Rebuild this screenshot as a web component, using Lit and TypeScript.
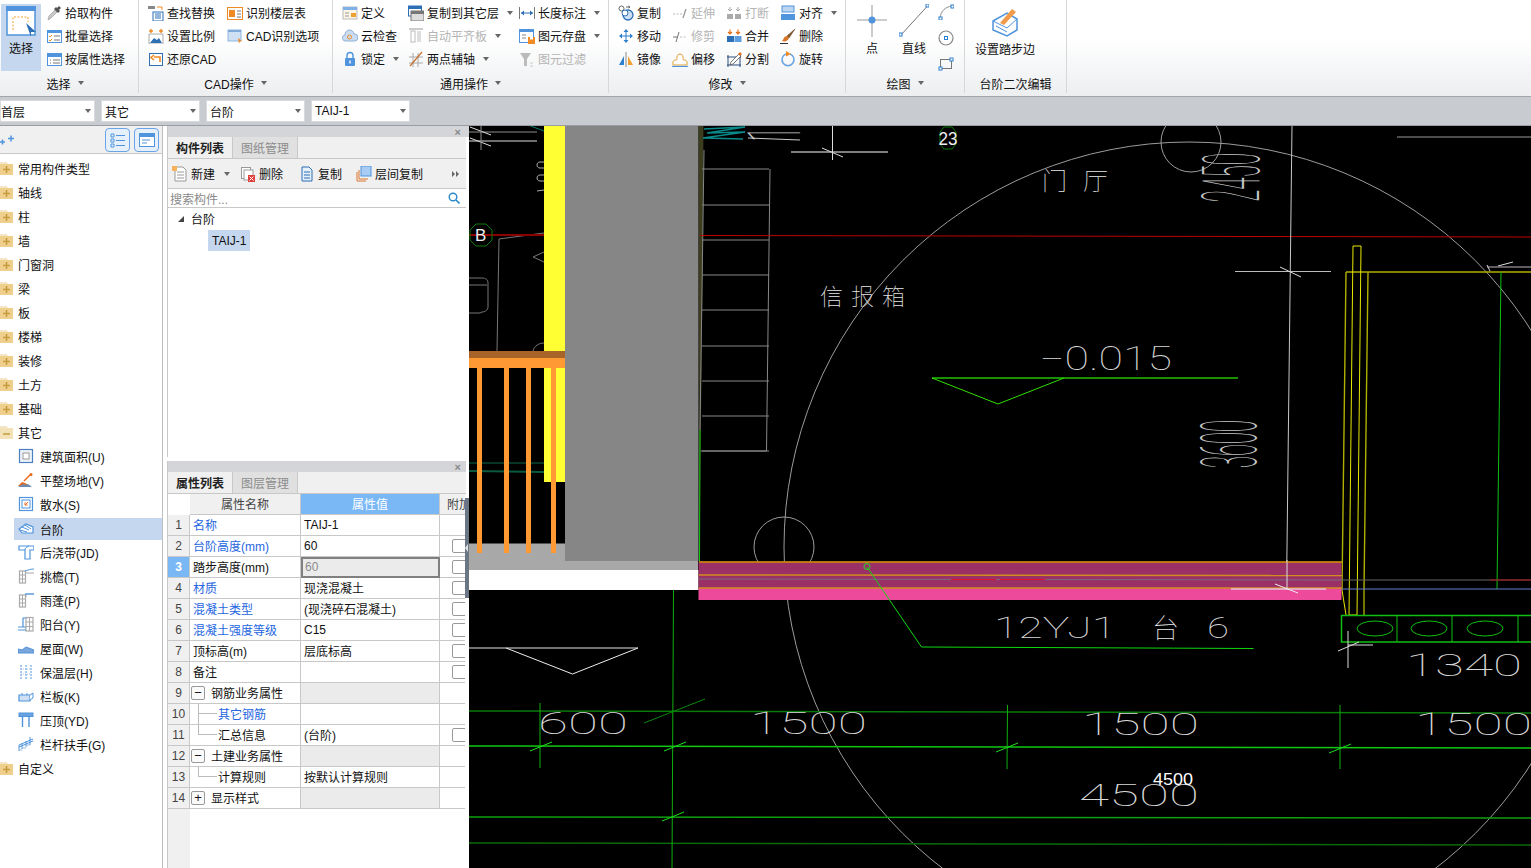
import {LitElement, css, html, svg} from "lit";
import {customElement} from "lit/decorators.js";

// 16x16 glyphs for the ribbon, tree and panel toolbars
const ICONS: Record<string, unknown> = {
  pick: svg`<path d="M2 15l1-4 6-6 2 2-6 6z" fill="#ccc" stroke="#999" stroke-width=".7"/><path d="M8 4l2-2 1 1 2-2 2 2-2 2 1 1-2 2z" fill="#555"/>`,
  batch: svg`<rect x="1.5" y="2.5" width="14" height="12" fill="#fff" stroke="#4f94dc"/><rect x="1" y="2" width="15" height="3" fill="#4f94dc"/><path d="M3 8l1 1 2-2M3 12l1 1 2-2" stroke="#f08a24" fill="none"/><path d="M8 8h6M8 12h6" stroke="#777"/>`,
  byprop: svg`<rect x="1.5" y="2.5" width="14" height="12" fill="#fff" stroke="#4f94dc"/><rect x="1" y="2" width="15" height="4" fill="#4f94dc"/><path d="M4 9h1M4 12h1M7 9h7M7 12h7" stroke="#777"/>`,
  find: svg`<path d="M0 1h7v3H0z" fill="#888"/><path d="M9 2h5v3" stroke="#f08a24" fill="none"/><rect x="5" y="7" width="10" height="9" fill="#fff" stroke="#2d6fb5"/><path d="M7 9h6M7 11h6M7 13h6" stroke="#2d6fb5"/>`,
  floor: svg`<rect x=".5" y="2.5" width="15" height="12" fill="#fff" stroke="#f08a24"/><rect x="2" y="5" width="6" height="7" fill="#f08a24"/><path d="M10 6h4M10 9h4M10 12h4" stroke="#777"/>`,
  scale: svg`<path d="M1 6h14v10H1z" fill="#fff" stroke="#aaa"/><path d="M2 15l4-5 3 2 2-2 3 5z" fill="#2d6fb5"/><path d="M1 3h4M11 3h4M3 1v4M13 1v4" stroke="#f08a24" stroke-width="1.4"/>`,
  cadopt: svg`<rect x="1" y="2" width="13" height="11" fill="#cfe0f4" stroke="#8fb6e0"/><rect x="1" y="2" width="13" height="2" fill="#7fa9d8"/><path d="M11 10l4 3-2 .5-1 2z" fill="#f08a24"/>`,
  restore: svg`<rect x="1.5" y="2.5" width="13" height="12" fill="#fff" stroke="#2d6fb5"/><path d="M12 11V6H6M6 4L3 6.500l3 2.500" stroke="#f08a24" stroke-width="1.600" fill="none"/>`,
  define: svg`<rect x="1" y="2" width="14" height="12" fill="#fdf6e6" stroke="#b9b9b9"/><rect x="1" y="2" width="14" height="3" fill="#7fb0e6"/><rect x="9" y="8" width="5" height="4" fill="#f0a030"/><path d="M3 8h4M3 11h4" stroke="#999"/>`,
  cloud: svg`<path d="M4 13a3 3 0 0 1-1-6 4.500 4.500 0 0 1 9-1 3.500 3.500 0 0 1 1 7z" fill="#c9dcf2" stroke="#8fb0d6"/><circle cx="7.500" cy="9" r="2" fill="none" stroke="#f08a24"/>`,
  lock: svg`<path d="M5 7V4.500a3 3 0 0 1 6 0V7" stroke="#4f94dc" stroke-width="1.400" fill="none"/><rect x="3" y="7" width="10" height="8" rx="1" fill="#4f94dc"/><rect x="7.300" y="9.500" width="1.400" height="3" fill="#fff"/>`,
  copyfloor: svg`<rect x=".5" y="1" width="13" height="10" fill="#fff" stroke="#2d6fb5"/><rect x="0" y="1" width="14" height="3" fill="#2d6fb5"/><rect x="3" y="6" width="13" height="10" fill="#ddd" stroke="#777"/><rect x="3" y="6" width="13" height="3" fill="#777"/>`,
  autoalign: svg`<path d="M1 1h14" stroke="#bbb" stroke-width="1.500"/><rect x="3" y="3" width="4" height="11" fill="#fff" stroke="#bbb"/><rect x="9" y="3" width="4" height="11" fill="#ddd"/>`,
  twopoint: svg`<path d="M1 6h14M1 12h14M5 2v14M10 2v14" stroke="#aaa"/><path d="M2 15L14 1" stroke="#c9722e" stroke-width="1.200"/>`,
  dim: svg`<path d="M.5 2v12M15.500 2v12" stroke="#777"/><path d="M2 8h12" stroke="#2d6fb5"/><path d="M2 8l3-2.500v5zM14 8l-3-2.500v5z" fill="#2d6fb5"/>`,
  save: svg`<rect x=".5" y="1.500" width="14" height="13" fill="#fff" stroke="#4f94dc"/><rect x="0" y="1" width="15" height="3" fill="#4f94dc"/><path d="M3 7h4M3 10h4" stroke="#888"/><rect x="9" y="9" width="7" height="7" fill="#f08a24"/><rect x="11" y="9" width="3" height="2.500" fill="#fff"/>`,
  filter: svg`<path d="M1 2h11L8 8v7H5V8z" fill="#bbb"/><path d="M11 12h3M11 15h3" stroke="#ccc"/>`,
  copy: svg`<circle cx="3.500" cy="3.500" r="2.500" fill="#fff" stroke="#666"/><path d="M8 2h4M12 2l-1.500-1M12 2l-1.500 1" stroke="#666"/><circle cx="10" cy="10" r="5" fill="#cfe0f4" stroke="#2d6fb5" stroke-width="1.300"/><circle cx="7" cy="8" r="3" fill="#fff" stroke="#2d6fb5"/>`,
  extend: svg`<path d="M1 9h9" stroke="#bbb" stroke-dasharray="2 1.500"/><path d="M11 13l3-9" stroke="#999" stroke-width="1.300"/>`,
  trim: svg`<path d="M1 9h5" stroke="#777"/><path d="M4 14l3-10" stroke="#777"/><path d="M8 9h7" stroke="#bbb" stroke-dasharray="2 1.500"/>`,
  break: svg`<rect x="1" y="9" width="6" height="5" fill="#aaa"/><rect x="9" y="9" width="6" height="5" fill="#aaa"/><path d="M4 2v4M12 2v4M2 4l2 2 2-2M10 4l2 2 2-2" stroke="#aaa" fill="none"/>`,
  merge: svg`<rect x="1" y="8" width="7" height="6" fill="#2d6fb5"/><rect x="8.500" y="8" width="7" height="6" fill="#5c9ee0"/><path d="M4 1.500v4M12 1.500v4M2 4l2 2 2-2M10 4l2 2 2-2" stroke="#e06a10" stroke-width="1.100" fill="none"/>`,
  align: svg`<rect x="2" y="1" width="12" height="6" fill="#bcd5f0" stroke="#4f94dc"/><rect x="1" y="9" width="14" height="6" fill="#4f94dc"/>`,
  move: svg`<path d="M8 1L5.500 4h5zM8 15l-2.500-3h5zM1 8l3-2.500v5zM15 8l-3-2.500v5z" fill="#2d7fd0"/><path d="M8 4v8M4 8h8" stroke="#2d7fd0"/>`,
  erase: svg`<path d="M15 1L7 8l2 2z" fill="#8a5a2c" stroke="#5c3a18" stroke-width=".5"/><path d="M7 8c-3 0-3 3-5 5 3 1 6 0 7-3z" fill="#d9762a"/><path d="M0 15.500h8" stroke="#333"/>`,
  mirror: svg`<path d="M1 14l5-9v9z" fill="#2d7fd0"/><path d="M8 1v15" stroke="#888"/><path d="M10 5l5 9h-5z" fill="#f0a030"/>`,
  offset: svg`<path d="M1 14v-3c0-1 1-2 3-2 1 0 1-1 1-3 0-4 6-4 6 0 0 2 0 3 1 3 2 0 3 1 3 2v3z" fill="#fff" stroke="#e0a030"/><path d="M0 15.500h16" stroke="#4f94dc" stroke-width="1.200"/>`,
  split: svg`<path d="M1 6h14M1 14h14M2 4v12M14 4v12" stroke="#2a4f80" fill="none"/><path d="M5 11l8-8 2 2-8 8-3 1z" fill="#fff" stroke="#555" stroke-width=".8"/><path d="M12 3l2-2 2 2-2 2z" fill="#d9762a"/>`,
  rotate: svg`<path d="M6 3a6 6 0 1 0 4 0" stroke="#6aa4e0" stroke-width="1.500" fill="none"/><path d="M6 0l5 3-5 2.500z" fill="#f08a24"/>`,
  arc: svg`<path d="M2 14C3 7 7 3 14 2" stroke="#888" fill="none"/><rect x="1" y="13" width="3" height="3" fill="#fff" stroke="#2d7fd0"/><rect x="13" y="1" width="3" height="3" fill="#fff" stroke="#2d7fd0"/>`,
  circle: svg`<circle cx="8" cy="8" r="7" fill="none" stroke="#888" stroke-width="1.200"/><rect x="6.500" y="6.500" width="3" height="3" fill="#fff" stroke="#2d7fd0"/>`,
  rect: svg`<rect x="2.500" y="3.500" width="11" height="9" fill="none" stroke="#777"/><rect x="12" y="2" width="3" height="3" fill="#fff" stroke="#2d7fd0"/><rect x="1" y="11" width="3" height="3" fill="#fff" stroke="#2d7fd0"/>`,
  area: svg`<rect x="1.500" y="1.500" width="13" height="13" fill="#eef3fa" stroke="#4f7fc0" stroke-width="1.200"/><rect x="5" y="5" width="6" height="6" fill="#fff" stroke="#999"/>`,
  level: svg`<path d="M0 14l4-4 3 1 5 3z" fill="#e8681c"/><path d="M0 15l5-3 3 1 2-1 4 3z" fill="#6d8bb5"/><path d="M6 9l6-6" stroke="#e8681c" stroke-width="1.500"/><circle cx="13" cy="2.500" r="1.500" fill="#e8681c"/>`,
  apron: svg`<rect x="1.500" y="1.500" width="13" height="13" fill="#fff" stroke="#4f94dc" stroke-width="1.200"/><rect x="4" y="4" width="8" height="8" fill="#fff" stroke="#4f94dc"/><path d="M10 6l-3 3M7 6.500V9h2.500" stroke="#e8681c" fill="none"/>`,
  step: svg`<path d="M1 8l7-5 7 3v6H4z" fill="#fff" stroke="#4f94dc" stroke-width="1.200"/><path d="M2 9l7 2M4 6l7 3M7 4l6 4" stroke="#4f94dc"/>`,
  jd: svg`<path d="M1 2h15v4H12v9H7V6H1z" fill="#fff" stroke="#4f94dc" stroke-width="1.200"/><path d="M7 6c0-2 1-3 4-4" stroke="#4f94dc" fill="none"/>`,
  cornice: svg`<rect x="1.500" y="3" width="6" height="12" fill="#fff" stroke="#aaa" stroke-width="1.200"/><path d="M4.500 3v12M1.500 7h6M1.500 11h6" stroke="#aaa"/><path d="M7 3c3-1 6-2 9-2" stroke="#4f94dc" fill="none"/><path d="M7 5h9" stroke="#aaa"/>`,
  canopy: svg`<rect x="1.500" y="3" width="6" height="12" fill="#fff" stroke="#aaa" stroke-width="1.200"/><path d="M4.500 3v12M1.500 7h6M1.500 11h6" stroke="#aaa"/><path d="M7 2h9" stroke="#4f94dc" stroke-width="1.400"/><path d="M8 5V3" stroke="#aaa"/>`,
  balcony: svg`<rect x="8" y="1.500" width="7" height="13.500" fill="#fff" stroke="#aaa" stroke-width="1.200"/><path d="M11.500 1.500V15M8 6h7M8 10.500h7" stroke="#aaa"/><path d="M8 2H5v9M0 11h8M0 14h8" stroke="#4f94dc" stroke-width="1.200" fill="none"/>`,
  roof: svg`<path d="M0 13V9l4 1 4-3 8 3v3z" fill="#7aa6dc" stroke="#4f94dc"/>`,
  insul: svg`<path d="M3 1v14M8 1v14M13 1v14" stroke="#4f94dc" stroke-dasharray="2 1"/><path d="M3 5h10M3 10h10" stroke="#aac5e8" stroke-dasharray="1 1"/>`,
  rail: svg`<path d="M1 7h11v6H1z" fill="#cfe0f4" stroke="#4f94dc" stroke-width="1.200"/><path d="M12 7l3-2v5l-3 2" fill="#fff" stroke="#4f94dc"/><path d="M4 7V5M9 7V5" stroke="#4f94dc"/>`,
  coping: svg`<rect x="1" y="1" width="14" height="3.500" fill="#6aa4e0" stroke="#4f94dc"/><path d="M4.500 5v10M11 5v10" stroke="#4f94dc" stroke-width="1.400"/>`,
  handrail: svg`<path d="M1 15V9l14-6" stroke="#4f94dc" fill="none"/><path d="M4 13V7M8 11V5M12 9V1M1 11l14-6" stroke="#4f94dc" fill="none"/><path d="M1 14h3M4 12h4M8 9h4" stroke="#8fb6e0"/>`,
  tnew: svg`<path d="M3 1h8l3 3v11H3z" fill="#fff" stroke="#999"/><path d="M5 6h7M5 9h7M5 12h7" stroke="#999"/><rect x="0" y="0" width="5" height="5" fill="#f6b35c"/>`,
  tdel: svg`<rect x="1.500" y="1.500" width="9" height="11" fill="#fff" stroke="#999"/><rect x="4" y="4" width="9" height="10" fill="#fff" stroke="#999"/><rect x="8" y="9" width="7" height="7" fill="#e0403c"/><path d="M9.500 10.500l4 4M13.500 10.500l-4 4" stroke="#fff"/>`,
  tcopy: svg`<path d="M3 1h7l3 3v11H3z" fill="#e6f0fb" stroke="#2d6fb5"/><path d="M5 6h6M5 9h6M5 12h6" stroke="#2d6fb5"/>`,
  tfloor: svg`<path d="M1 6v9h9" stroke="#d9762a" fill="none"/><path d="M3 4v9h9" stroke="#d9762a" fill="none"/><rect x="5" y="0" width="10" height="10" fill="#a8ccf4" stroke="#4f94dc"/>`,
};

const icon = (name: string) =>
  html`<svg class="ic" viewBox="0 0 16 16">${ICONS[name]}</svg>`;

interface Item {
  i: string;
  t: string;
  caret?: boolean;
  off?: boolean;
}

const G2 = [
  [{i: "find", t: "查找替换"}, {i: "scale", t: "设置比例"}, {i: "restore", t: "还原CAD"}],
  [{i: "floor", t: "识别楼层表"}, {i: "cadopt", t: "CAD识别选项"}],
];
const G3 = [
  [{i: "define", t: "定义"}, {i: "cloud", t: "云检查"}, {i: "lock", t: "锁定", caret: true}],
  [
    {i: "copyfloor", t: "复制到其它层", caret: true},
    {i: "autoalign", t: "自动平齐板", caret: true, off: true},
    {i: "twopoint", t: "两点辅轴", caret: true},
  ],
  [
    {i: "dim", t: "长度标注", caret: true},
    {i: "save", t: "图元存盘", caret: true},
    {i: "filter", t: "图元过滤", off: true},
  ],
];
const G4 = [
  [{i: "copy", t: "复制"}, {i: "move", t: "移动"}, {i: "mirror", t: "镜像"}],
  [{i: "extend", t: "延伸", off: true}, {i: "trim", t: "修剪", off: true}, {i: "offset", t: "偏移"}],
  [{i: "break", t: "打断", off: true}, {i: "merge", t: "合并"}, {i: "split", t: "分割"}],
  [{i: "align", t: "对齐", caret: true}, {i: "erase", t: "删除"}, {i: "rotate", t: "旋转"}],
];

const FOLDERS = ["常用构件类型", "轴线", "柱", "墙", "门窗洞", "梁", "板", "楼梯", "装修", "土方", "基础"];
const CHILDREN = [
  ["area", "建筑面积(U)"],
  ["level", "平整场地(V)"],
  ["apron", "散水(S)"],
  ["step", "台阶"],
  ["jd", "后浇带(JD)"],
  ["cornice", "挑檐(T)"],
  ["canopy", "雨蓬(P)"],
  ["balcony", "阳台(Y)"],
  ["roof", "屋面(W)"],
  ["insul", "保温层(H)"],
  ["rail", "栏板(K)"],
  ["coping", "压顶(YD)"],
  ["handrail", "栏杆扶手(G)"],
];

interface Row {
  name: string;
  value?: string;
  link?: boolean;
  check?: boolean;
  fold?: "-" | "+";
  conn?: "t" | "l";
}

const ROWS: Row[] = [
  {name: "名称", value: "TAIJ-1", link: true},
  {name: "台阶高度(mm)", value: "60", link: true, check: true},
  {name: "踏步高度(mm)", value: "60", check: true},
  {name: "材质", value: "现浇混凝土", link: true, check: true},
  {name: "混凝土类型", value: "(现浇碎石混凝土)", link: true, check: true},
  {name: "混凝土强度等级", value: "C15", link: true, check: true},
  {name: "顶标高(m)", value: "层底标高", check: true},
  {name: "备注", value: "", check: true},
  {name: "钢筋业务属性", fold: "-"},
  {name: "其它钢筋", value: "", link: true, conn: "t"},
  {name: "汇总信息", value: "(台阶)", check: true, conn: "l"},
  {name: "土建业务属性", fold: "-"},
  {name: "计算规则", value: "按默认计算规则", conn: "l"},
  {name: "显示样式", fold: "+"},
];

// CAD lettering: stretched thin text placed by its box on the drawing
const cad = (t: string, x: number, y: number, len: number, h: number, fill = "#d8d8d8") =>
  svg`<text class="cad" x=${x} y=${y} fill=${fill} font-size=${h / 0.71} textLength=${len} lengthAdjust="spacingAndGlyphs">${t}</text>`;
const cadUp = (t: string, x: number, y: number, len: number, h: number) =>
  svg`<text class="cad" transform="translate(${x} ${y}) rotate(-90)" fill="#c4c4c4" font-size=${h / 0.71} textLength=${len} lengthAdjust="spacingAndGlyphs">${t}</text>`;
const ln = (x1: number, y1: number, x2: number, y2: number, c: string, w = 1) =>
  svg`<line x1=${x1} y1=${y1} x2=${x2} y2=${y2} stroke=${c} stroke-width=${w}/>`;

@customElement("app-root")
export class AppRoot extends LitElement {
  static override styles = css`
    :host {
      display: flex;
      flex-direction: column;
      width: 1531px;
      height: 868px;
      overflow: hidden;
      background: #fff;
      color: #111;
      font: 12px "Liberation Sans", "Noto Sans CJK SC", sans-serif;
    }
    .ic {
      width: 16px;
      height: 16px;
      flex: none;
      display: block;
    }
    .caret {
      width: 0;
      height: 0;
      border: 3.5px solid transparent;
      border-top: 4px solid #666;
      border-bottom: 0;
      flex: none;
    }

    /* ribbon */
    .ribbon {
      display: flex;
      height: 96px;
      flex: none;
      background: linear-gradient(#fff 40%, #eceef0);
      border-bottom: 1px solid #a2a5aa;
      box-sizing: content-box;
    }
    .group {
      display: flex;
      flex-direction: column;
      box-sizing: border-box;
      height: 93px;
      border-right: 1px solid #d6d8db;
      flex: none;
    }
    .g1 { width: 139px; }
    .g2 { width: 194px; }
    .g3 { width: 276px; }
    .g4 { width: 237px; }
    .g5 { width: 119px; }
    .g6 { width: 102px; }
    .gbody {
      display: flex;
      height: 72px;
      padding: 1px 0 0 9px;
      box-sizing: border-box;
    }
    .g1 .gbody { padding: 4px 0 0 1px; }
    .glabel {
      flex: 1;
      display: flex;
      align-items: center;
      justify-content: center;
      gap: 7px;
      padding-top: 1px;
    }
    .g1 .glabel { padding-right: 8px; }
    .col { flex: none; }
    .g2 .col:first-child { width: 79px; }
    .g3 .col:nth-child(1) { width: 66px; }
    .g3 .col:nth-child(2) { width: 111px; }
    .g4 .col { width: 54px; }
    .item {
      display: flex;
      align-items: center;
      gap: 3px;
      height: 23px;
      white-space: nowrap;
    }
    .item .caret { margin-left: 5px; }
    .off { color: #b4b4b4; }
    .big {
      display: flex;
      flex-direction: column;
      align-items: center;
      flex: none;
    }
    .sel {
      width: 40px;
      height: 67px;
      background: #c5d7ee;
      margin-right: 5px;
      padding-top: 2px;
      box-sizing: border-box;
      gap: 3px;
    }
    .sel svg { width: 30px; height: 30px; }
    .g1 .col { margin-top: -3px; }
    .g5 .gbody { padding-left: 11px; gap: 12px; }
    .draw {
      width: 30px;
      gap: 2px;
      padding-top: 3px;
    }
    .draw svg { width: 30px; height: 33px; }
    .minis {
      display: flex;
      flex-direction: column;
      gap: 10px;
      margin-left: -3px;
      padding-top: 3px;
    }
    .g6 .gbody { padding: 8px 0 0 10px; }
    .stepbtn { gap: 2px; }
    .stepbtn svg { width: 30px; height: 30px; }

    /* selectors */
    .bar {
      display: flex;
      gap: 6px;
      height: 28px;
      flex: none;
      box-sizing: border-box;
      padding-top: 3px;
      background: #c8cbd0;
    }
    .combo {
      display: flex;
      align-items: center;
      justify-content: space-between;
      width: 99px;
      height: 22px;
      padding: 0 3px 0 3px;
      box-sizing: border-box;
      background: #fff;
      border: 1px solid #d8dade;
    }
    .combo:first-child { width: 95px; padding-left: 0; }

    /* main area */
    .main {
      display: flex;
      flex: 1;
      min-height: 0;
      border-top: 1px solid #9a9da3;
    }
    .tree {
      width: 163px;
      flex: none;
      box-sizing: border-box;
      border-right: 1px solid #bcbec2;
    }
    .treehead {
      display: flex;
      align-items: center;
      gap: 4px;
      height: 28px;
      box-sizing: border-box;
      padding-right: 3px;
      background: #f0f0f0;
      border-bottom: 1px solid #c8c8c8;
    }
    .treehead .plus { margin-right: auto; width: 14px; height: 10px; }
    .tog {
      width: 25px;
      height: 24px;
      box-sizing: border-box;
      display: flex;
      align-items: center;
      justify-content: center;
      background: #e6f0fb;
      border: 1px solid #6aa4e8;
      border-radius: 4px;
    }
    .nodes { padding-top: 2px; }
    .node {
      display: flex;
      align-items: center;
      gap: 5px;
      height: 24px;
    }
    .folder { width: 13px; height: 14px; flex: none; }
    .child {
      display: flex;
      align-items: center;
      gap: 6px;
      height: 24px;
      margin-left: 14px;
      padding-left: 4px;
    }
    .child.on { background: #c5d7ee; height: 22px; margin-top: 2px; }
    .panels {
      width: 302px;
      margin-left: 4px;
      flex: none;
      display: flex;
      flex-direction: column;
      position: relative;
    }
    .panel {
      display: flex;
      flex-direction: column;
      border-left: 1px solid #c8c8c8;
      width: 298px;
    }
    .p1 { height: 331px; flex: none; }
    .p2 { flex: 1; min-height: 0; overflow: hidden; }
    .gap { height: 4px; width: 302px; flex: none; }
    .ptitle {
      width: 301px;
      height: 11px;
      flex: none;
      display: flex;
      align-items: center;
      justify-content: flex-end;
      padding-right: 8px;
      box-sizing: border-box;
      background: #d3d5d9;
      color: #888;
      font-size: 11px;
      font-weight: bold;
    }
    .tabs {
      display: flex;
      height: 22px;
      flex: none;
      background: #f0f0f0;
      border-bottom: 1px solid #c8c8c8;
      box-sizing: border-box;
    }
    .tab {
      width: 65px;
      display: flex;
      align-items: center;
      justify-content: center;
      box-sizing: border-box;
      border-right: 1px solid #c8c8c8;
    }
    .tab.act { color: #222; font-weight: 600; }
    .tab.dim { background: #e0e0e0; color: #8c8c8c; }
    .ptools {
      display: grid;
      grid-template-columns: 68px 59px 57px 1fr 14px;
      align-items: center;
      height: 30px;
      flex: none;
      padding-left: 4px;
      box-sizing: border-box;
      background: #f0f0f0;
      border-bottom: 1px solid #c8c8c8;
    }
    .ptool { display: flex; align-items: center; gap: 3px; }
    .ptool .caret { margin-left: 6px; }
    .search {
      display: flex;
      align-items: center;
      justify-content: space-between;
      height: 19px;
      flex: none;
      padding: 0 6px 0 2px;
      box-sizing: border-box;
      color: #8a8a8a;
      border-bottom: 1px solid #c8c8c8;
    }
    .search svg { width: 12px; height: 12px; }
    .ptree { padding: 0 0 0 10px; }
    .proot { display: flex; align-items: center; gap: 7px; height: 21px; }
    .tri {
      width: 0;
      height: 0;
      border-style: solid;
      border-width: 0 0 6px 6px;
      border-color: transparent transparent #444 transparent;
    }
    .pleaf {
      display: inline-flex;
      align-items: center;
      height: 21px;
      margin: 1px 0 0 30px;
      padding: 0 4px;
      background: #c5d7ee;
    }
    .grid {
      display: grid;
      grid-template-columns: 22px 111px 139px 25px;
      grid-auto-rows: 21px;
      flex: 1;
      align-content: start;
      background: linear-gradient(to right, #f0f0f0 22px, #fff 22px);
    }
    .cell {
      display: flex;
      align-items: center;
      box-sizing: border-box;
      border-right: 1px solid #c8c8c8;
      border-bottom: 1px solid #c8c8c8;
      padding-left: 3px;
      padding-bottom: 1px;
      white-space: nowrap;
      overflow: hidden;
      min-width: 0;
    }
    .num { justify-content: center; background: #f0f0f0; padding: 0 0 1px; color: #444; }
    .num.cur { background: #7ab8f5; color: #fff; font-weight: bold; }
    .hd { background: #f0f0f0; justify-content: center; color: #444; padding: 0 0 1px; }
    .hd.blank { background: #fff; border: 0; }
    .hd.val { background: #7ab8f5; color: #fff; }
    .hd.extra { justify-content: flex-start; padding-left: 7px; border-right: 0; }
    .link { color: #2566e0; }
    .edit {
      background: #ebebeb;
      color: #8c8c8c;
      border: 2px solid #808080;
      padding-left: 2px;
    }
    .shade { background: #ebebeb; }
    .extra { border-right: 0; padding-left: 12px; }
    .box {
      width: 16px;
      height: 14px;
      flex: none;
      box-sizing: border-box;
      border: 1px solid #999;
      border-radius: 2px;
      background: #fff;
    }
    .fold {
      width: 14px;
      height: 14px;
      flex: none;
      box-sizing: border-box;
      border: 1px solid #999;
      border-radius: 2px;
      display: flex;
      align-items: center;
      justify-content: center;
      margin: 0 6px 0 -2px;
      background: #fafafa;
      font-size: 13px;
      line-height: 1;
    }
    .conn {
      position: relative;
      width: 24px;
      height: 21px;
      flex: none;
      margin-left: -3px;
    }
    .conn::before {
      content: "";
      position: absolute;
      left: 8px;
      top: 0;
      width: 18px;
      height: 10px;
      border-left: 1px solid #bbb;
      border-bottom: 1px solid #bbb;
    }
    .conn.t::after {
      content: "";
      position: absolute;
      left: 8px;
      top: 10px;
      height: 11px;
      border-left: 1px solid #bbb;
    }
    .conn + span { margin-left: 4px; }
    .splitter {
      position: absolute;
      right: 0;
      top: 372px;
      width: 4px;
      height: 100px;
      background: #6a7683;
    }
    .splitter::after {
      content: "";
      position: absolute;
      left: 0;
      top: 46px;
      border: 4px solid transparent;
      border-left: 0;
      border-right: 3px solid #dfe3e6;
    }
    .canvas {
      flex: 1;
      min-width: 0;
      background: #000;
      display: block;
    }
    .cad {
      font-family: Roboto, "Liberation Sans", sans-serif;
      font-weight: 100;
    }
    .cadcjk {
      font-family: "Noto Sans CJK SC", sans-serif;
      font-weight: 100;
    }
  `;

  private renderItem(it: Item) {
    return html`<div class="item ${it.off ? "off" : ""}">
      ${icon(it.i)}<span>${it.t}</span>${it.caret ? html`<i class="caret"></i>` : ""}
    </div>`;
  }

  private renderCols(cols: Item[][]) {
    return cols.map((c) => html`<div class="col">${c.map((it) => this.renderItem(it))}</div>`);
  }

  private renderRibbon() {
    return html`<div class="ribbon">
      <div class="group g1">
        <div class="gbody">
          <div class="big sel">
            <svg viewBox="0 0 30 30">
              <rect x="1" y="1" width="28" height="28" fill="#fff" stroke="#4f94dc" stroke-width="1.500"/>
              <rect x="0" y="0" width="30" height="5" fill="#4f94dc"/>
              <path d="M7 24V11h15v5" fill="none" stroke="#f0a030" stroke-dasharray="2 1.500"/>
              <path d="M20 17l10 9h-5v5z" fill="#2d6fb5"/>
            </svg>
            <span>选择</span>
          </div>
          <div class="col">
            ${[{i: "pick", t: "拾取构件"}, {i: "batch", t: "批量选择"}, {i: "byprop", t: "按属性选择"}].map((it) =>
              this.renderItem(it)
            )}
          </div>
        </div>
        <div class="glabel">选择<i class="caret"></i></div>
      </div>
      <div class="group g2">
        <div class="gbody">${this.renderCols(G2)}</div>
        <div class="glabel">CAD操作<i class="caret"></i></div>
      </div>
      <div class="group g3">
        <div class="gbody">${this.renderCols(G3)}</div>
        <div class="glabel">通用操作<i class="caret"></i></div>
      </div>
      <div class="group g4">
        <div class="gbody">${this.renderCols(G4)}</div>
        <div class="glabel">修改<i class="caret"></i></div>
      </div>
      <div class="group g5">
        <div class="gbody">
          <div class="big draw">
            <svg viewBox="0 0 30 33">
              <path d="M0 16h30M15 1v32" stroke="#999"/>
              <circle cx="15" cy="16" r="3.500" fill="#4f94dc"/>
            </svg>
            <span>点</span>
          </div>
          <div class="big draw">
            <svg viewBox="0 0 30 33">
              <path d="M1.500 31.500L28.500 2" stroke="#777"/>
              <rect x="0" y="29" width="3" height="3" fill="#fff" stroke="#2d7fd0"/>
              <rect x="27" y="0" width="3" height="3" fill="#fff" stroke="#2d7fd0"/>
            </svg>
            <span>直线</span>
          </div>
          <div class="minis">${icon("arc")}${icon("circle")}${icon("rect")}</div>
        </div>
        <div class="glabel">绘图<i class="caret"></i></div>
      </div>
      <div class="group g6">
        <div class="gbody">
          <div class="big stepbtn">
            <svg viewBox="0 0 30 30">
              <path d="M3 13l14-8 10 6v11l-10 6-14-6z" fill="#fff" stroke="#4f94dc" stroke-width="1.500"/>
              <path d="M3 13l14 7 10-9M6 18l11 6" stroke="#4f94dc" fill="none"/>
              <path d="M10 15L22 1l4 3-12 13z" fill="#f09a4a"/>
            </svg>
            <span>设置踏步边</span>
          </div>
        </div>
        <div class="glabel">台阶二次编辑</div>
      </div>
    </div>`;
  }

  private folder(open = false) {
    return html`<svg class="folder" viewBox="0 0 13 14">
      <path d="M0 3l1-1h6l1 1h5v11H0z" fill=${open ? "#f3e2b8" : "#efcf8c"}/>
      <path d="M0 1h7v2H0z" fill="#f3e6c8"/>
      ${open
        ? svg`<path d="M3 9h7" stroke="#c49a3f" stroke-width="1.500"/>`
        : svg`<path d="M3 8.500h7M6.500 5v7" stroke="#c49a3f" stroke-width="1.500"/>`}
    </svg>`;
  }

  private renderTree() {
    return html`<div class="tree">
      <div class="treehead">
        <svg class="plus" viewBox="0 0 14 10">
          <path d="M8 3.500h6M11 .5v6M0 7h5M2.500 4.500v5" stroke="#4f94dc" stroke-width="1.500"/>
        </svg>
        <div class="tog">
          <svg class="ic" viewBox="0 0 16 16">
            <path d="M1 2h3v3H1zM1 7h3v3H1zM1 12h3v3H1z" fill="none" stroke="#4f94dc"/>
            <path d="M6 3.500h9M6 8.500h9M6 13.500h9" stroke="#4f94dc"/>
          </svg>
        </div>
        <div class="tog">
          <svg class="ic" viewBox="0 0 16 16">
            <rect x=".5" y="1.500" width="15" height="13" fill="#fff" stroke="#4f94dc"/>
            <rect x="0" y="1" width="16" height="4" fill="#4f94dc"/>
            <path d="M3 8h8M3 11h5" stroke="#4f94dc"/>
          </svg>
        </div>
      </div>
      <div class="nodes">
        ${FOLDERS.map((f) => html`<div class="node">${this.folder()}<span>${f}</span></div>`)}
        <div class="node">${this.folder(true)}<span>其它</span></div>
        ${CHILDREN.map(
          ([ic, t]) => html`<div class="child ${t === "台阶" ? "on" : ""}">${icon(ic)}<span>${t}</span></div>`
        )}
        <div class="node">${this.folder()}<span>自定义</span></div>
      </div>
    </div>`;
  }

  private renderGrid() {
    return html`<div class="grid">
      <div class="cell hd blank"></div>
      <div class="cell hd">属性名称</div>
      <div class="cell hd val">属性值</div>
      <div class="cell hd extra">附加</div>
      ${ROWS.map((r, idx) => {
        const cur = idx === 2;
        return html`
          <div class="cell num ${cur ? "cur" : ""}">${idx + 1}</div>
          <div class="cell">
            ${r.fold ? html`<span class="fold">${r.fold === "-" ? "−" : "+"}</span>` : ""}
            ${r.conn ? html`<i class="conn ${r.conn}"></i>` : ""}
            <span class=${r.link ? "link" : ""}>${r.name}</span>
          </div>
          <div class="cell ${cur ? "edit" : ""} ${r.fold ? "shade" : ""}">${r.value ?? ""}</div>
          <div class="cell extra">${r.check ? html`<i class="box"></i>` : ""}</div>
        `;
      })}
    </div>`;
  }

  private renderPanels() {
    return html`<div class="panels">
      <div class="panel p1">
        <div class="ptitle">×</div>
        <div class="tabs">
          <div class="tab act">构件列表</div>
          <div class="tab dim">图纸管理</div>
        </div>
        <div class="ptools">
          <div class="ptool">${icon("tnew")}新建<i class="caret"></i></div>
          <div class="ptool">${icon("tdel")}删除</div>
          <div class="ptool">${icon("tcopy")}复制</div>
          <div class="ptool">${icon("tfloor")}层间复制</div>
          <svg width="8" height="8" viewBox="0 0 8 8"><path d="M0 1l3 3-3 3zM4 1l3 3-3 3z" fill="#666"/></svg>
        </div>
        <div class="search">
          搜索构件...
          <svg viewBox="0 0 12 12">
            <circle cx="5" cy="5" r="3.800" fill="none" stroke="#2a8ac8" stroke-width="1.400"/>
            <path d="M8 8l3.500 3.500" stroke="#2a8ac8" stroke-width="1.600"/>
          </svg>
        </div>
        <div class="ptree">
          <div class="proot"><i class="tri"></i>台阶</div>
          <div class="pleaf">TAIJ-1</div>
        </div>
      </div>
      <div class="gap"></div>
      <div class="panel p2">
        <div class="ptitle">×</div>
        <div class="tabs">
          <div class="tab act">属性列表</div>
          <div class="tab dim">图层管理</div>
        </div>
        ${this.renderGrid()}
      </div>
      <div class="splitter"></div>
    </div>`;
  }

  private renderCanvas() {
    const gray = "#8c8c8c";
    return html`<svg class="canvas" viewBox="469 126 1062 742" preserveAspectRatio="xMinYMin slice">
      <!-- left block: wall, railing, slab -->
      <rect x="544" y="125" width="21" height="357" fill="#ffff33"/>
      <rect x="469" y="543.500" width="229" height="26.500" fill="#a8a8a8"/>
      <rect x="565" y="126" width="133.500" height="435" fill="#868686"/>
      <rect x="469" y="570" width="229.500" height="20" fill="#fff"/>
      <path d="M698.500 126h5l-1 150-3 280z" fill="#3c3c1e"/>
      ${ln(700, 430, 699.500, 561, "#10d010")}
      ${ln(469, 463, 544, 463, "#0a6a4c")} ${ln(469, 471, 544, 472, "#0a5a40", 2)}
      <rect x="469" y="351" width="96" height="7" fill="#a86428"/>
      <rect x="469" y="358" width="96" height="10" fill="#ff9933"/>
      ${[477, 504, 526, 551].map((x) => svg`<rect x=${x} y="368" width="5" height="185" fill="#ff9933"/>`)}

      <!-- top-left linework -->
      ${ln(469, 132, 537, 132, gray)} ${ln(469, 141, 537, 141, "#ddd")}
      ${ln(470, 127, 491, 135, "#ddd")} ${ln(470, 138, 491, 146, "#ddd")} ${ln(481, 125, 481, 150, gray)}
      ${ln(528, 125, 544, 131, "#0a7a6a")}
      <path d="M544 162h-4c-4 0-4 6 0 6h4M544 175h-4c-4 0-4 6 0 6h4M544 190l-7 1" fill="none" stroke="#aaa"/>
      <path d="M499 239l45-6M499 239l-2 112M544 252l-11 5 11 5" fill="none" stroke="#777"/>
      <path d="M469 278h13c4 0 6 2 6 5v24c0 3-3 5-6 5l-2 1h-11M469 285h18" fill="none" stroke="#777"/>
      <path d="M533 351c1-5 6-8 11-8" fill="none" stroke="#777"/>
      ${ln(469, 235, 544, 235, "#8b0000", 2)}
      <polygon points="476,224 486,224 492,230 492,240 486,246 476,246 470,240 470,230" fill="none" stroke="#0a7a0a"/>
      <text x="475" y="241" fill="#eee" font-size="17" font-family="Liberation Sans">B</text>

      <!-- stair ladder -->
      ${[169, 205, 240, 275, 310, 346, 381, 416, 451].map((y) => ln(702, y, 769, y, "#888"))}
      <path d="M704 150l-4 280M770 169l-3.500 282h-66" fill="none" stroke="#888"/>
      <path d="M704 129l41-2-38 6 38-1-42 6 40 1" fill="none" stroke="#0a8a8a" stroke-width="1.500"/>
      ${cadUp("100", 800, 142, 49, 53)}
      ${ln(748, 138, 800, 140, "#ccc")}

      <!-- arcs and circles -->
      <circle cx="1189" cy="547" r="405" fill="none" stroke="#9c9c9c"/>
      <circle cx="784" cy="547" r="30" fill="none" stroke="#9c9c9c"/>
      <circle cx="1191" cy="142" r="30" fill="none" stroke="#9c9c9c"/>

      <!-- axis and ticks -->
      ${ln(700, 235.500, 1531, 237, "#c00000")}
      ${ln(1292, 125, 1286.500, 590, "#c8c8c8")}
      ${ln(1235, 271.500, 1331, 271.500, "#bbb")} ${ln(1280, 267, 1301, 277, "#ddd")}
      ${ln(791, 152, 888, 152, "#aaa", 1.500)} ${ln(832.500, 125, 832.500, 160, "#ddd")} ${ln(822, 148, 843, 157, "#ddd")}
      ${ln(1397, 137, 1531, 137, "#999")}
      <polygon points="944,127 952,127 956,132 956,144 952,149 944,149 940,144 940,132" fill="none" stroke="#0a7a0a"/>
      <text x="938.500" y="145" fill="#eee" font-size="19" font-family="Liberation Sans" textLength="19" lengthAdjust="spacingAndGlyphs">23</text>

      <text class="cadcjk" x="1042" y="190" fill="#e8e8e8" font-size="25" letter-spacing="16">门厅</text>
      <text class="cadcjk" x="820" y="305" fill="#e8e8e8" font-size="23" letter-spacing="8">信报箱</text>
      ${cad("−0.015", 1039, 370, 133, 23)}
      ${ln(932, 378, 1238, 378, "#20c000", 1.500)}
      <path d="M932 378l66 26 66-26" fill="none" stroke="#30e000"/>
      ${cadUp("2450", 1259, 202, 49, 56)}
      ${cadUp("3600", 1256, 468, 48, 55)}

      <!-- right frame -->
      <path d="M1346 272L1342 590M1368 272l-4 318M1346 272H1531" fill="none" stroke="#b0b000" stroke-width="1.400"/>
      <path d="M1353 246h8l-4 369h-8zM1342 590l4 25M1364 590v25" fill="none" stroke="#e8e800"/>
      ${ln(1501, 272, 1497, 589, "#10c010")}
      ${ln(1487, 265, 1490, 271, "#ddd")} ${ln(1498, 266, 1513, 262, "#ddd")} ${ln(1487, 267, 1531, 267, "#bbb")}

      <!-- pink band -->
      <rect x="698.500" y="561.500" width="643" height="26.500" fill="#9b3066"/>
      <rect x="698.500" y="588" width="643" height="12" fill="#ee4a9c"/>
      ${ln(699, 562, 1342, 562, "#d09000", 1.500)} ${ln(699, 575, 1342, 575.500, "#d08c20", 1.500)} ${ln(699, 588, 1342, 588, "#d08c20", 1.500)}
      ${ln(699, 579, 1342, 580, "#7a6a80")}
      ${ln(951, 579.500, 996, 579.500, "#e01030")} ${ln(1000, 579.500, 1045, 579.500, "#e01030")}
      ${ln(1231, 589, 1326, 589, "#e8c0d8", 1.500)} ${ln(1275, 584, 1298, 593, "#eee")} ${ln(1287, 560, 1287, 590, "#ddd")}
      ${ln(1342, 580, 1531, 580, "#666")} ${ln(1490, 580, 1531, 580, "#b01010")}
      ${ln(1342, 589, 1531, 589, "#6080d0")}

      <!-- leader and note -->
      <circle cx="867" cy="566.500" r="3" fill="none" stroke="#20e020"/>
      <path d="M867 567l54.500 80 332 1.500" fill="none" stroke="#10d810"/>
      ${cad("12YJ1", 994, 638, 122, 21)} ${cad("6", 1207, 638, 22, 21)}
      <text class="cadcjk" x="1152" y="638" fill="#e8e8e8" font-size="27">台</text>

      <!-- right planter -->
      <rect x="1341.500" y="615.500" width="200" height="26.500" fill="none" stroke="#10c010" stroke-width="1.500"/>
      ${[1397, 1452, 1518].map((x) => ln(x, 616, x, 642, "#10c010"))}
      ${[1375, 1429, 1485].map((x) => svg`<ellipse cx=${x} cy="628.500" rx="18" ry="7.500" fill="none" stroke="#10c010"/>`)}
      ${ln(1348, 631, 1348, 668, "#ddd")} ${ln(1348, 645, 1373, 645, "#ddd")} ${ln(1338, 651, 1359, 642, "#ddd")}
      ${cad("1340", 1406, 676, 116, 22)}

      <!-- level mark -->
      ${ln(469, 648, 638, 648, "#999", 1.500)}
      <path d="M506 648l66.500 26L638 648" fill="none" stroke="#eee"/>

      <!-- dimension rows -->
      ${ln(469, 711, 1531, 713, "#0a7a0a", 1.500)} ${ln(469, 746, 1531, 748, "#10c810", 1.500)}
      ${ln(469, 817, 1531, 818, "#0ea00e", 1.500)} ${ln(469, 843, 1531, 845, "#0a6a0a", 1.500)}
      ${ln(673.500, 590, 672, 868, "#10b010")}
      ${ln(540, 703, 540, 768, "#10b010")} ${ln(1007.500, 705, 1007, 769, "#10b010")} ${ln(1340, 705, 1340, 769, "#10b010")}
      ${ln(644, 723, 705, 699, "#0a8a0a")}
      ${[[530, 751], [664, 751], [996, 752], [1329, 753], [662, 821]].map(([x, y]) => ln(x, y, x + 22, y - 9, "#20e020"))}
      ${cad("600", 538, 734, 90, 22)}
      ${cad("1500", 750, 734, 117, 22)}
      ${cad("1500", 1082, 735, 117, 22)}
      ${cad("1500", 1415, 735, 117, 22)}
      ${cad("4500", 1079, 806, 120, 22)}
      <text x="1153" y="785" fill="#fff" font-size="17" font-family="Liberation Sans" textLength="40" lengthAdjust="spacingAndGlyphs">4500</text>
    </svg>`;
  }

  override render() {
    return html`
      ${this.renderRibbon()}
      <div class="bar">
        ${["首层", "其它", "台阶", "TAIJ-1"].map(
          (c) => html`<div class="combo"><span>${c}</span><i class="caret"></i></div>`
        )}
      </div>
      <div class="main">
        ${this.renderTree()} ${this.renderPanels()} ${this.renderCanvas()}
      </div>
    `;
  }
}
